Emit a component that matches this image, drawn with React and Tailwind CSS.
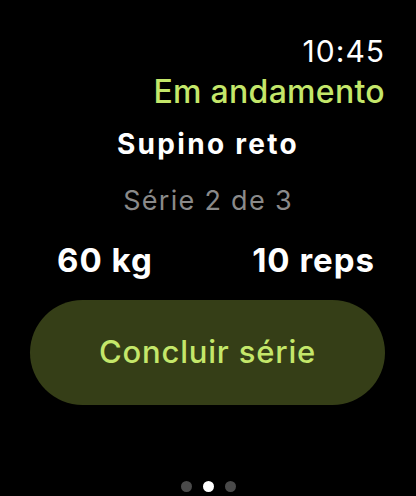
import React from 'react';

export default function App() {
  return (
    <div
      className="w-[416px] h-[496px] bg-black text-white flex flex-col overflow-hidden"
      style={{ fontFamily: 'Inter, "Liberation Sans", sans-serif' }}
    >
      <div className="flex flex-col items-end pr-[31px] pt-[33px]">
        <div className="text-[30px] leading-[36px] tracking-[1px]">10:45</div>
        <div className="text-[32px] leading-[38px] mt-[4px] font-medium tracking-[0.3px] text-[#c4e76a]">Em andamento</div>
      </div>
      <div className="text-center text-[28px] leading-[34px] font-bold tracking-[2.3px] mt-[16px]">Supino reto</div>
      <div className="text-center text-[27px] leading-[34px] tracking-[1.3px] text-[#8a8a8a] mt-[23px]">Série 2 de 3</div>
      <div className="flex justify-between pl-[57px] pr-[41px] mt-[22px] text-[33px] leading-[40px] font-bold tracking-[1px]">
        <span>60 kg</span>
        <span>10 reps</span>
      </div>
      <div className="ml-[30px] mr-[31px] mt-[20px] h-[105px] rounded-full bg-[#353e17] flex items-center justify-center">
        <span className="text-[31px] font-medium tracking-[0.8px] text-[#c4e76a]">Concluir série</span>
      </div>
      <div className="flex-1" />
      <div className="flex justify-center gap-[11px] pb-[4px]">
        <span className="w-[11px] h-[11px] rounded-full bg-[#4a4a4a]" />
        <span className="w-[11px] h-[11px] rounded-full bg-white" />
        <span className="w-[11px] h-[11px] rounded-full bg-[#4a4a4a]" />
      </div>
    </div>
  );
}
